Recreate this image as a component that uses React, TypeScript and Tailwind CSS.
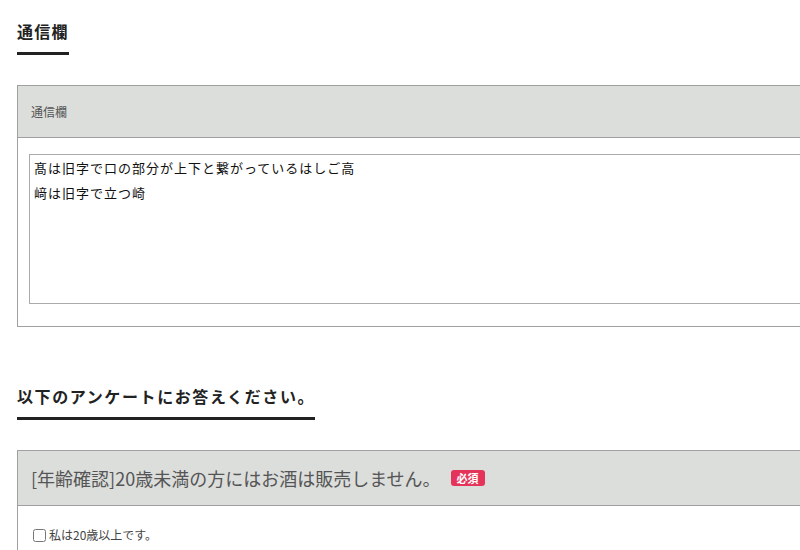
export default function App() {
  return (
    <div className="w-[800px] h-[550px] overflow-hidden bg-white font-['Noto_Sans_CJK_JP','Noto_Sans',sans-serif] text-[#333]">
      <div className="w-[830px] pl-[17px] pt-[18px]">
        <section>
          <h2 className="inline-block text-[16px] font-bold tracking-[0.08em] leading-[26px] text-[#222] pb-[8px] border-b-[3px] border-[#222]">
            通信欄
          </h2>
          <div className="mt-[30px] border border-[#a0a0a0]">
            <div className="h-[52px] flex items-center px-[13px] bg-[#dcdedc] border-b border-[#a0a0a0] text-[12px] text-[#555]">
              通信欄
            </div>
            <div className="px-[11px] pt-[16px] pb-[22px]">
              <textarea
                className="block w-full h-[150px] border border-[#aaa] pl-[4px] pr-[6px] py-0 text-[13px] tracking-[1px] leading-[25px] text-[#111] resize-none outline-none"
                defaultValue={"髙は旧字で口の部分が上下と繋がっているはしご高\n﨑は旧字で立つ崎"}
              />
            </div>
          </div>
        </section>
        <section className="mt-[56px]">
          <h2 className="inline-block text-[16px] font-bold tracking-[0.1em] leading-[26px] text-[#222] pb-[8px] border-b-[3px] border-[#222]">
            以下のアンケートにお答えください。
          </h2>
          <div className="mt-[30px] border border-[#a0a0a0]">
            <div className="h-[55px] flex items-center px-[13px] bg-[#dcdedc] border-b border-[#a0a0a0] text-[18px] text-[#555]">
              [年齢確認]20歳未満の方にはお酒は販売しません。
              <span className="ml-[10px] px-[6px] h-[16px] flex items-center rounded-[3px] bg-[#e5345a] text-white text-[11px] font-bold leading-none">
                必須
              </span>
            </div>
            <div className="px-[15px] pt-[20px] pb-[20px]">
              <label className="flex items-center gap-[3px] text-[12px] text-[#444]">
                <input type="checkbox" className="w-[13px] h-[13px] m-0" />
                私は20歳以上です。
              </label>
            </div>
          </div>
        </section>
      </div>
    </div>
  )
}
